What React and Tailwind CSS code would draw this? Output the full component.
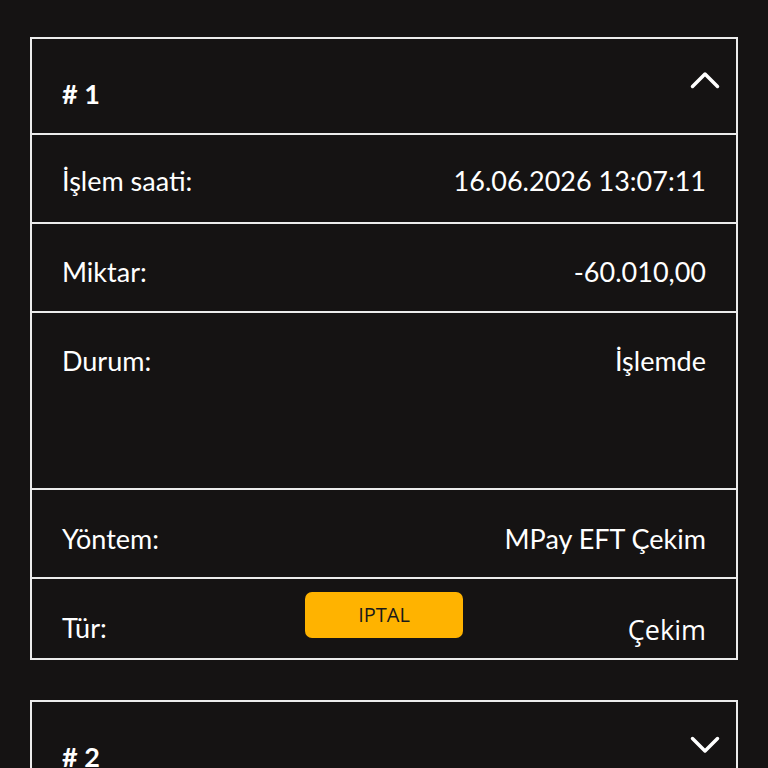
import React from 'react';

const rows = [
  { label: 'İşlem saati:', value: '16.06.2026 13:07:11', h: 'h-[89px] pt-[30px]' },
  { label: 'Miktar:', value: '-60.010,00', h: 'h-[89px] pt-[32px]' },
  { label: 'Durum:', value: 'İşlemde', h: 'h-[177px] pt-[32px]' },
  { label: 'Yöntem:', value: 'MPay EFT Çekim', h: 'h-[89px] pt-[33px]' },
];

function Chevron({ up }) {
  return (
    <svg width="30" height="18" viewBox="0 0 30 18" fill="none" stroke="white" strokeWidth="3.5" strokeLinecap="round" strokeLinejoin="round">
      {up ? <polyline points="2.5,15.5 15,3 27.5,15.5" /> : <polyline points="2.5,2.5 15,15 27.5,2.5" />}
    </svg>
  );
}

export default function App() {
  return (
    <div className="min-h-screen bg-[#151313] px-[30px] pt-[37px] text-white" style={{ fontFamily: 'Lato, "Open Sans", sans-serif' }}>
      <div className="border-2 border-[#ececec]">
        <div className="flex h-[94px] items-start justify-between pl-[30px] pr-[16px]">
          <div className="pt-[39px] text-[27px] font-bold leading-[1.2]"># 1</div>
          <div className="pt-[32px]"><Chevron up /></div>
        </div>
        {rows.map((r) => (
          <div key={r.label} className={`flex ${r.h} items-start justify-between border-t-2 border-[#ececec] px-[30px] text-[27px] leading-[1.2]`}>
            <span>{r.label}</span>
            <span>{r.value}</span>
          </div>
        ))}
        <div className="relative flex h-[81px] items-start justify-between border-t-2 border-[#ececec] px-[30px] pt-[33px] text-[27px] leading-[1.2]">
          <span>Tür:</span>
          <button className="absolute left-[273px] top-[13px] flex h-[46px] w-[158px] items-center justify-center rounded-[7px] bg-[#ffb300] text-[20px] text-[#1a1a1a]" style={{ fontFamily: '"Open Sans", sans-serif' }}>IPTAL</button>
          <span className="leading-[1.3]" style={{ fontFamily: '"Open Sans", sans-serif' }}>Çekim</span>
        </div>
      </div>
      <div className="mt-[40px] border-2 border-[#ececec]">
        <div className="flex h-[94px] items-start justify-between pl-[30px] pr-[16px]">
          <div className="pt-[39px] text-[27px] font-bold leading-[1.2]"># 2</div>
          <div className="pt-[34px]"><Chevron /></div>
        </div>
      </div>
    </div>
  );
}
